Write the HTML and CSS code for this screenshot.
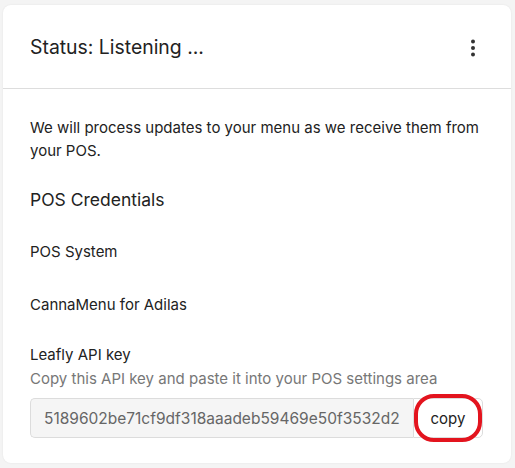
FILE: index.html
```html
<!DOCTYPE html>
<html>
<head>
<meta charset="utf-8">
<link rel="stylesheet" href="styles.css">
</head>
<body>
<div class="card">
  <div class="card-header">
    <h2 class="title">Status: Listening ...</h2>
    <button class="kebab" aria-label="More">
      <svg width="6" height="18" viewBox="0 0 6 18"><circle cx="3" cy="2.5" r="2" fill="#333"/><circle cx="3" cy="9" r="2" fill="#333"/><circle cx="3" cy="15.5" r="2" fill="#333"/></svg>
    </button>
  </div>
  <div class="card-body">
    <p class="intro">We will process updates to your menu as we receive them from your POS.</p>
    <h3 class="section">POS Credentials</h3>
    <div class="field-label">POS System</div>
    <div class="field-value">CannaMenu for Adilas</div>
    <div class="key-label">Leafly API key</div>
    <div class="key-help">Copy this API key and paste it into your POS settings area</div>
    <div class="key-row">
      <div class="key-input">5189602be71cf9df318aaadeb59469e50f3532d2</div>
      <button class="copy-btn">copy</button>
    </div>
  </div>
</div>
</body>
</html>
```
FILE: styles.css
```css
html, body { margin: 0; padding: 0; }
body {
  background: #f4f4f4;
  font-family: "Inter", "Liberation Sans", sans-serif;
  color: #222;
  width: 515px;
  height: 468px;
  overflow: hidden;
}
.card {
  margin: 5px 4px 0 3px;
  background: #fff;
  border-radius: 8px;
  box-shadow: 0 0 2px rgba(0,0,0,0.08);
  height: 458px;
  box-sizing: border-box;
}
.card-header {
  height: 83px;
  border-bottom: 1px solid #ddd;
  display: flex;
  align-items: center;
  justify-content: space-between;
  padding: 0 35px 0 27px;
}
.title {
  margin: 0;
  font-size: 19.4px;
  font-weight: 400;
  color: #222;
}
.kebab {
  border: 0;
  background: none;
  padding: 0;
  display: flex;
  margin-top: 2px;
}
.card-body {
  padding: 27px 27px 0 27px;
}
.intro {
  margin: 0;
  font-size: 15px;
  line-height: 23px;
}
.section {
  margin: 26px 0 0 0;
  font-size: 17.5px;
  font-weight: 400;
  line-height: 24px;
}
.field-label, .field-value {
  font-size: 15px;
  line-height: 20px;
}
.field-label { margin-top: 30px; }
.field-value { margin-top: 33px; }
.key-label {
  font-size: 15px;
  line-height: 20px;
  margin-top: 30px;
}
.key-help {
  font-size: 15px;
  line-height: 20px;
  color: #777;
  margin-top: 4px;
}
.key-row {
  display: flex;
  margin-top: 9px;
  width: 453px;
  height: 40px;
}
.key-input {
  flex: 1;
  background: #f5f5f5;
  border: 1px solid #dcdcdc;
  border-right: 0;
  border-radius: 5px 0 0 5px;
  color: #666;
  font-size: 15.5px;
  display: flex;
  align-items: center;
  padding-left: 13px;
}
.copy-btn {
  width: 70px;
  background: #fff;
  border: 1px solid #dcdcdc;
  border-radius: 0 5px 5px 0;
  font: inherit;
  font-size: 15px;
  color: #222;
  position: relative;
  padding: 0;
}
.copy-btn::after {
  content: "";
  position: absolute;
  left: 0;
  top: -5px;
  right: 0;
  bottom: -5px;
  border: 4px solid #e3141e;
  border-radius: 20px;
}
```
